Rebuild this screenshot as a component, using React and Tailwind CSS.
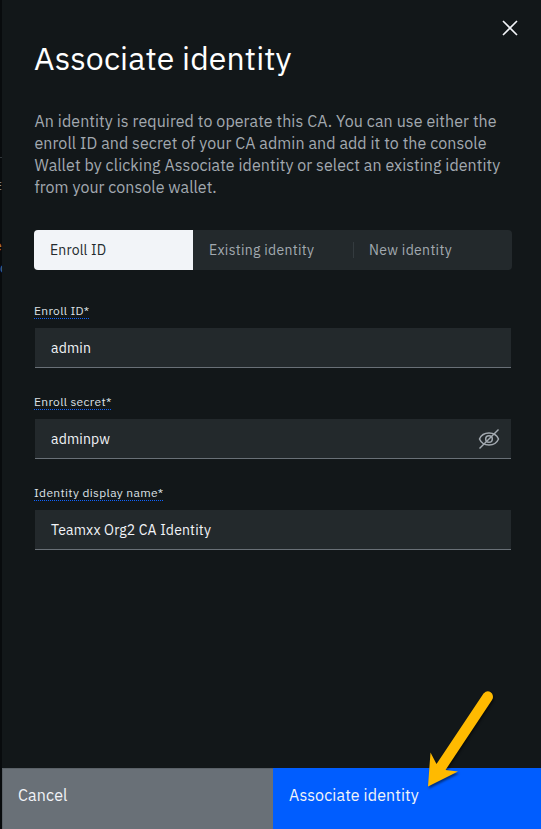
import React from 'react';

const intro = [
  ['An identity is required to operate this CA. You can use either the', 'tracking-[0.08px]'],
  ['enroll ID and secret of your CA admin and add it to the console', 'tracking-[0.07px]'],
  ['Wallet by clicking Associate identity or select an existing identity', 'tracking-[0.07px]'],
  ['from your console wallet.', 'tracking-[0.05px]'],
];

function EyeOff() {
  return (
    <svg viewBox="0 0 22 22" className="h-[22px] w-[22px]" fill="none" stroke="#a2a9b0" strokeWidth="1.5">
      <path d="M1.5 11C3.2 7 7 5 11 5s7.800 2 9.500 6c-1.700 4-5.500 6-9.500 6S3.200 15 1.500 11Z" />
      <circle cx="11" cy="11" r="3.300" />
      <path d="M1.500 20.500 20.500 1.500" />
    </svg>
  );
}

function Field({ label, value, labelClass, valueClass, secret }) {
  return (
    <div className="h-[91px]">
      <div className="flex h-[25px]">
        <label className={`h-[16px] whitespace-nowrap border-b border-dotted border-[#0f62fe] text-[12px] leading-[16px] text-[#dde1e6] ${labelClass}`}>
          {label}
        </label>
      </div>
      <div className="ml-px mr-px flex h-10 items-center justify-between border-b border-[#697077] bg-[#23292c] pl-4 pr-[11px] text-[14px] text-[#f2f4f8]">
        <span className={`whitespace-nowrap pt-[2px] ${valueClass}`}>{value}</span>
        {secret && <EyeOff />}
      </div>
    </div>
  );
}

export default function App() {
  return (
    <div className="relative flex h-[829px] w-[541px] overflow-hidden bg-[#121719] font-['IBM_Plex_Sans','Roboto',sans-serif]">
      <div className="relative w-[2px] shrink-0 overflow-hidden bg-[#080b0d]">
        <div className="absolute left-0 top-[157px] h-px w-[2px] bg-[#30363a]" />
        <span className="absolute -left-[5px] top-[178px] text-[12px] leading-4 text-[#92979b]">E</span>
        <span className="absolute -left-[6px] top-[238px] text-[14px] leading-4 text-[#b57835]">e</span>
        <span className="absolute left-0 top-[260px] text-[14px] leading-4 text-[#426ba5]">o</span>
      </div>
      <main className="flex w-[539px] flex-col">
        <div className="flex h-[768px] flex-col pl-8 pr-[29px]">
          <header className="flex h-[110px] justify-between">
            <h1 className="whitespace-nowrap pt-[38px] text-[32px] font-normal leading-10 tracking-[0.12px] text-white">Associate identity</h1>
            <button aria-label="Close" className="-mr-[6px] mt-5 h-4 w-4">
              <svg viewBox="0 0 16 16" className="h-4 w-4" stroke="#f2f4f8" strokeWidth="1.600">
                <path d="M1 1 15 15M15 1 1 15" />
              </svg>
            </button>
          </header>
          <div className="h-[120px] pl-[0.5px] text-[16px] leading-[22px] text-[#a2a9b0]">
            {intro.map(([text, tracking]) => (
              <p key={text} className={`whitespace-nowrap ${tracking}`}><span>{text}</span></p>
            ))}
          </div>
          <div className="flex h-10 w-[478px] shrink-0 items-center overflow-hidden rounded-[4px] bg-[#23292c] text-[14px] text-[#a2a9b0]">
            <button className="h-full w-[159px] whitespace-nowrap bg-[#f2f4f8] pl-4 text-left tracking-[0.16px] text-[#242a2e]">Enroll ID</button>
            <button className="h-4 w-[160px] whitespace-nowrap pl-4 text-left leading-4 tracking-[0.3px]">Existing identity</button>
            <button className="h-4 w-[159px] whitespace-nowrap border-l border-[#343b3f] pl-[15px] text-left leading-4 tracking-[0.32px]">New identity</button>
          </div>
          <form className="mt-[33px]">
            <Field label="Enroll ID*" value="admin" labelClass="w-[55px] tracking-[0.32px]" valueClass="tracking-[0.16px]" />
            <Field label="Enroll secret*" value="adminpw" labelClass="w-[77px] tracking-[0.32px]" valueClass="tracking-[0.16px]" secret />
            <Field label="Identity display name*" value="Teamxx Org2 CA Identity" labelClass="w-[129px] tracking-[0.34px]" valueClass="tracking-[0.16px]" />
          </form>
        </div>
        <footer className="flex h-[61px] text-[16px] leading-[22px]">
          <button className="flex w-[271px] items-start border-l border-t border-[#5b6268] bg-[#697077] pl-[15px] pt-[15px] tracking-[0.16px] text-[#f2f4f8]">Cancel</button>
          <button className="flex w-[268px] items-start whitespace-nowrap bg-[#005dff] pl-4 pt-4 tracking-[0.12px] text-[#f2f4f8]">Associate identity</button>
        </footer>
      </main>
      <svg viewBox="0 0 80 110" className="absolute left-[420px] top-[684px] h-[110px] w-[80px] drop-shadow-[1px_2px_1px_rgba(0,0,0,0.5)]">
        <path d="M63.500 9.500Q68 5 72 9.500Q74 13 72 16L25.500 86L38 87.500L8 102.500L10.500 68.500L16.500 80Z" fill="#ffba00" />
      </svg>
    </div>
  );
}
